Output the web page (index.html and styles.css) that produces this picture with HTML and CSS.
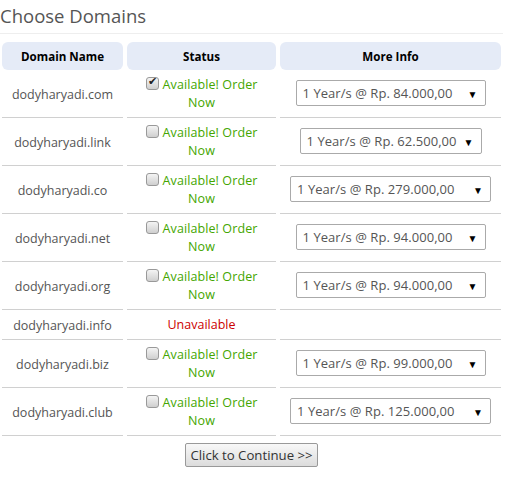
FILE: index.html
```html
<!DOCTYPE html>
<html>
<head>
<meta charset="utf-8">
<link rel="stylesheet" href="styles.css">
</head>
<body>
<div class="page">
  <h2 class="title">Choose Domains</h2>
  <table class="domains">
    <thead>
      <tr><th class="c1">Domain Name</th><th class="c2">Status</th><th class="c3">More Info</th></tr>
    </thead>
    <tbody>
      <tr>
        <td class="name">dodyharyadi.com</td>
        <td class="status"><input type="checkbox" class="chk" checked><span class="ok">Available! Order Now</span></td>
        <td class="info"><span class="sel w190"><select><option>1 Year/s @ Rp. 84.000,00</option></select></span></td>
      </tr>
      <tr>
        <td class="name">dodyharyadi.link</td>
        <td class="status"><input type="checkbox" class="chk"><span class="ok">Available! Order Now</span></td>
        <td class="info"><span class="sel w182"><select><option>1 Year/s @ Rp. 62.500,00</option></select></span></td>
      </tr>
      <tr>
        <td class="name">dodyharyadi.co</td>
        <td class="status"><input type="checkbox" class="chk"><span class="ok">Available! Order Now</span></td>
        <td class="info"><span class="sel w201"><select><option>1 Year/s @ Rp. 279.000,00</option></select></span></td>
      </tr>
      <tr>
        <td class="name">dodyharyadi.net</td>
        <td class="status"><input type="checkbox" class="chk"><span class="ok">Available! Order Now</span></td>
        <td class="info"><span class="sel w190"><select><option>1 Year/s @ Rp. 94.000,00</option></select></span></td>
      </tr>
      <tr>
        <td class="name">dodyharyadi.org</td>
        <td class="status"><input type="checkbox" class="chk"><span class="ok">Available! Order Now</span></td>
        <td class="info"><span class="sel w190"><select><option>1 Year/s @ Rp. 94.000,00</option></select></span></td>
      </tr>
      <tr>
        <td class="name">dodyharyadi.info</td>
        <td class="status"><span class="no">Unavailable</span></td>
        <td class="info"></td>
      </tr>
      <tr>
        <td class="name">dodyharyadi.biz</td>
        <td class="status"><input type="checkbox" class="chk"><span class="ok">Available! Order Now</span></td>
        <td class="info"><span class="sel w190"><select><option>1 Year/s @ Rp. 99.000,00</option></select></span></td>
      </tr>
      <tr>
        <td class="name">dodyharyadi.club</td>
        <td class="status"><input type="checkbox" class="chk"><span class="ok">Available! Order Now</span></td>
        <td class="info"><span class="sel w201"><select><option>1 Year/s @ Rp. 125.000,00</option></select></span></td>
      </tr>
    </tbody>
  </table>
  <div class="actions"><button class="btn" type="button">Click to Continue &gt;&gt;</button></div>
</div>
</body>
</html>
```
FILE: styles.css
```css
html, body {
  margin: 0;
  padding: 0;
  background: #fff;
}
body {
  font-family: "Open Sans", "Noto Sans", sans-serif;
  font-size: 12.5px;
  color: #555;
}
.page {
  width: 503px;
}
.title {
  margin: 0;
  height: 33px;
  line-height: 31px;
  font-size: 18.5px;
  font-weight: normal;
  color: #555;
  border-bottom: 1px solid #eee;
}
.domains {
  margin: 8px -2px 0;
  width: 507px;
  border-collapse: separate;
  border-spacing: 4px 0;
  table-layout: fixed;
}
.c1 { width: 121px; }
.c2 { width: 149px; }
.c3 { width: 221px; }
th {
  background: #e5ebf7;
  border-radius: 6px;
  color: #000;
  font-weight: bold;
  font-size: 11.6px;
  line-height: 18px;
  padding: 6px 0 4px;
  text-align: center;
}
td {
  border-bottom: 1px solid #d0d0d0;
  padding: 6px 8px 5px;
  line-height: 18px;
  text-align: center;
  vertical-align: middle;
}
.name {
  color: #555;
  padding-top: 7px;
  padding-bottom: 4px;
}
.info {
  padding-top: 5px;
  padding-bottom: 6px;
}
.ok { color: #44a600; letter-spacing: 0.1px; }
.no { color: #cc0000; }
.chk {
  appearance: none;
  -webkit-appearance: none;
  width: 13px;
  height: 13px;
  margin: 0 4px 0 0;
  vertical-align: -1px;
  border: 1px solid #999;
  border-radius: 3px;
  background: linear-gradient(#f4f4f4, #cfcfcf);
  position: relative;
}
.chk:checked::after {
  content: "✔";
  position: absolute;
  left: 1px;
  top: -3px;
  font-size: 11px;
  color: #222;
}
.sel {
  display: inline-block;
  position: relative;
  vertical-align: middle;
}
.sel select {
  appearance: none;
  -webkit-appearance: none;
  width: 100%;
  height: 26px;
  border: 1px solid #aaa;
  border-radius: 2px;
  background: #fff;
  color: #555;
  font-family: inherit;
  font-size: 13px;
  letter-spacing: 0.05px;
  padding: 0 20px 0 6px;
}
.sel::after {
  content: "▼";
  position: absolute;
  right: 8px;
  top: 5px;
  font-size: 10px;
  color: #000;
  pointer-events: none;
}
.w190 { width: 190px; }
.w182 { width: 182px; }
.w201 { width: 201px; }
.actions {
  text-align: center;
  padding-top: 7px;
}
.btn {
  font-family: inherit;
  font-size: 13.2px;
  color: #333;
  height: 24px;
  padding: 0 4px;
  border: 1px solid #999;
  border-radius: 2px;
  background: linear-gradient(#f8f8f8, #dcdcdc);
}
```
